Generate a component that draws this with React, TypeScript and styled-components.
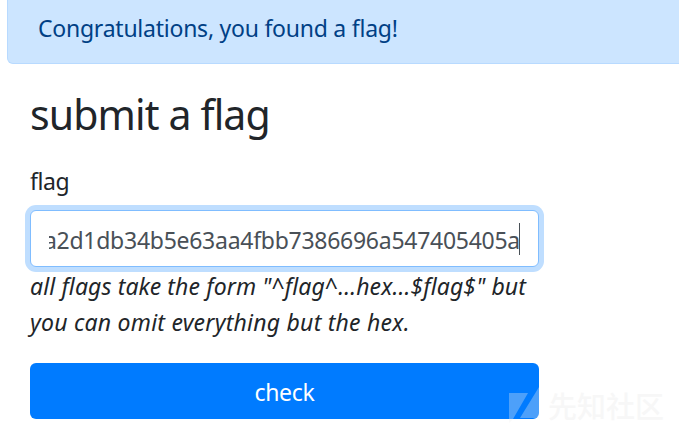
import React from "react";
import styled, { createGlobalStyle } from "styled-components";

const GlobalStyle = createGlobalStyle`
  * { box-sizing: border-box; }
  html, body { margin: 0; background: #fff; overflow: hidden; }
  body {
    color: #212529;
    font-family: "Noto Sans", "Open Sans", sans-serif;
    font-size: 23px;
    font-weight: 400;
    line-height: 36px;
  }
`;

const Page = styled.div`
  position: relative;
  width: 679px;
  height: 427px;
  overflow: hidden;
`;

const Alert = styled.div`
  width: 700px;
  height: 64px;
  margin-left: 7px;
  padding: 10px 30px 0;
  color: #004085;
  background: #cce5ff;
  border: 1px solid #b8daff;
  border-top: 0;
  border-radius: 0 0 6px 6px;
`;

const Line = styled.span<{ $spacing?: number }>`
  display: block;
  white-space: nowrap;
  letter-spacing: ${(p) => p.$spacing ?? 0}px;
`;

const Form = styled.form`
  display: flex;
  flex-direction: column;
  width: 509px;
  margin: 28px 0 0 30px;
`;

const Title = styled.h1`
  margin: 0 0 27px;
  font-size: 41px;
  font-weight: 400;
  line-height: 44px;
`;

const Label = styled.label`
  height: 36px;
  margin-bottom: 11px;
`;

const Field = styled.div`
  display: flex;
  align-items: center;
  height: 57px;
  padding: 0 18px;
  color: #495057;
  background: #fff;
  border: 1px solid #80bdff;
  border-radius: 6px;
  box-shadow: 0 0 0 5px #bfdeff;
`;

const Value = styled.div`
  display: flex;
  flex: 1;
  justify-content: flex-end;
  min-width: 0;
  margin-top: 3px;
  overflow: hidden;
`;

const Caret = styled.span`
  flex: none;
  width: 1px;
  height: 32px;
  margin: 1px 0 0 -1px;
  background: #495057;
`;

const Hint = styled.em`
  display: block;
  margin: 1px 0 23px;
`;

const Submit = styled.button`
  display: flex;
  justify-content: center;
  height: 56px;
  padding: 11px 0 0;
  color: #fff;
  font: inherit;
  background: #007bff;
  border: 0;
  border-radius: 6px;
`;

const Watermark = styled.div`
  position: absolute;
  left: 509px;
  top: 386px;
  display: flex;
  gap: 5px;
  color: #f7f7f7;
  font: 500 29px/38px "Noto Sans CJK SC", sans-serif;
`;

export default function App() {
  return (
    <Page>
      <GlobalStyle />
      <Alert>
        <Line $spacing={-0.24}>Congratulations, you found a flag!</Line>
      </Alert>
      <Form>
        <Title>
          <Line $spacing={-0.87}>submit a flag</Line>
        </Title>
        <Label>
          <Line $spacing={-0.4}>flag</Line>
        </Label>
        <Field>
          <Value>
            <Line $spacing={-0.27}>a2d1db34b5e63aa4fbb7386696a547405405a</Line>
          </Value>
          <Caret />
        </Field>
        <Hint>
          <Line $spacing={0.12}>all flags take the form "^flag^...hex...$flag$" but</Line>
          <Line $spacing={0.23}>you can omit everything but the hex.</Line>
        </Hint>
        <Submit type="button">
          <Line $spacing={-0.3}>check</Line>
        </Submit>
      </Form>
      <Watermark>
        <svg width="34" height="38" viewBox="0 0 34 38" fill="#eee" fillOpacity="0.32">
          <path d="M0 7h19L4 33L0 37zM30 1v31H11L30 1z" />
        </svg>
        <span>先知社区</span>
      </Watermark>
    </Page>
  );
}
